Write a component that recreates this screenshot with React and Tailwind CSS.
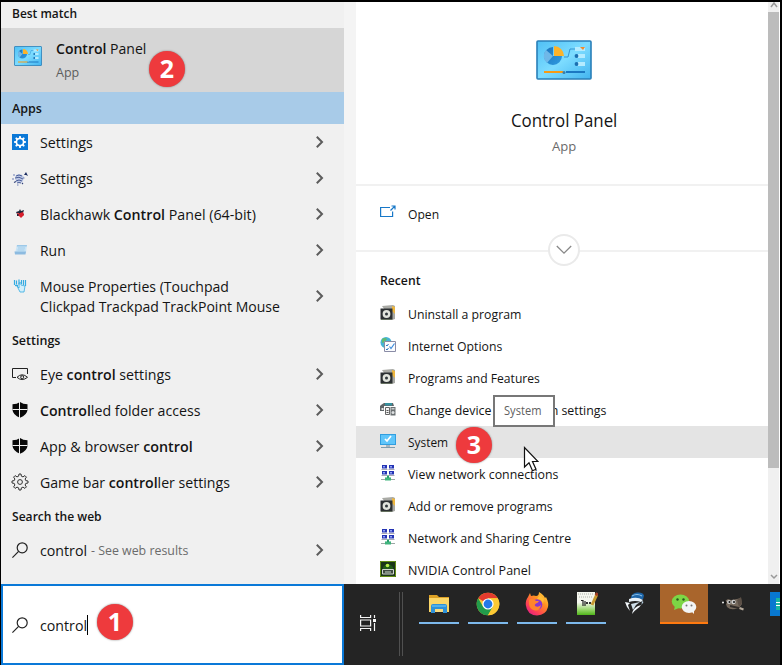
import { useLayoutEffect, useRef } from "react";

// Squeezes or stretches a line of text to an exact width, and seats it on its baseline.
function Fit({ w, className = "", outer = "", children }) {
  const ref = useRef(null);
  useLayoutEffect(() => {
    const el = ref.current;
    const natural = el.offsetWidth;
    if (natural > 0) el.style.transform = `translateY(1px) scaleX(${w / natural})`;
  }, [w]);
  return (
    <div className={`flex shrink-0 whitespace-nowrap ${outer}`} style={{ width: w }}>
      <span ref={ref} className={`shrink-0 origin-left ${className}`}>
        {children}
      </span>
    </div>
  );
}

const B = ({ children }) => <span className="font-semibold">{children}</span>;

const ControlPanelIcon = ({ className }) => (
  <svg viewBox="0 0 56 40" className={className}>
    <defs>
      <linearGradient id="cp" x1="0" y1="0" x2="1" y2="1">
        <stop offset="0" stopColor="#4fc0f5" />
        <stop offset="0.5" stopColor="#7ddcff" />
        <stop offset="1" stopColor="#42b4f0" />
      </linearGradient>
      <linearGradient id="pie" x1="0" y1="0" x2="1" y2="1">
        <stop offset="0" stopColor="#1c74bd" />
        <stop offset="1" stopColor="#2f9be0" />
      </linearGradient>
    </defs>
    <rect x="1" y="1" width="54" height="38" rx="1" fill="url(#cp)" stroke="#2a7fb8" strokeWidth="1.600" />
    <path d="M17 16V7A9 9 0 1 0 26 16Z" fill="url(#pie)" />
    <path d="M17 16L10 10A9 9 0 0 0 11 23Z" fill="#6fb8e8" />
    <path d="M18 16V6a10 10 0 0 1 10 10Z" fill="#fcb32a" />
    <path d="M28 17h4l2-8h8" fill="none" stroke="#3594d2" />
    <path d="M39 7h10v4H39zM42 14h7v4H42zM42 22h7v4H42z" fill="#b4ebff" />
    <path d="M44 7h5l-2 3z" fill="#f08a2a" />
    <circle cx="40.500" cy="16" r="1.900" fill="#1c6fb0" />
    <circle cx="40.500" cy="24" r="1.900" fill="#1c6fb0" />
    <path d="M8 32h19" stroke="#f79b14" strokeWidth="2" />
    <path d="M30 32h19" stroke="#1b78c2" strokeWidth="2" />
    <circle cx="28" cy="32.500" r="1.500" fill="#3b7ea8" />
  </svg>
);

const GEAR = "M7 0h2l.4 2.200 1.600.7L12.900 1.600l1.500 1.500-1.300 1.900.7 1.600L16 7v2l-2.200.4-.7 1.600 1.300 1.900-1.500 1.500-1.900-1.300-1.600.7L9 16H7l-.4-2.200-1.600-.7-1.900 1.300-1.500-1.500L2.900 11l-.7-1.600L0 9V7l2.200-.4L2.900 5 1.600 3.100l1.500-1.500L5 2.900l1.600-.7z";

const BlueGear = () => (
  <svg viewBox="0 0 16 16" className="size-4">
    <path d="M0 0h16v16H0z" fill="#0a78d7" />
    <g transform="translate(2 2) scale(.75)">
      <path d={GEAR} fill="#fff" />
      <circle cx="8" cy="8" r="3.700" fill="#0a78d7" />
    </g>
  </svg>
);
const Molecule = () => (
  <svg viewBox="0 0 16 16" className="size-4" fill="none">
    <path d="M3 7q1-3 4-3t5 3l-1 4q-2 3-5 2-3-2-3-6z" fill="#bcc7e4" />
    <path d="M4 6q3-2 6 0M3 8q4-2 8 1M4 11q3-2 6 0M5 13q2-1 4 0" stroke="#4d5f98" strokeWidth="1" />
    <path d="M12 5l2-3 2 4-2-1z" fill="#1b2c60" />
    <path d="M2 12.500l2-1M10 13l1 1" stroke="#33447c" strokeWidth="1.100" />
    <path d="M0 9h2M5 15h1.500M1 5h2M11 8h1.500" stroke="#6f7fb5" strokeWidth="1.200" />
  </svg>
);
const Blackhawk = () => (
  <svg viewBox="0 0 16 16" className="size-4">
    <path d="M4 6l3-1 1-2 1 2 3-1-1 3 1 2-3 1-3 0-1 0 0-2z" fill="#20263a" />
    <path d="M8 7l3-1 1 3-3 3-3-3z" fill="#d81e2c" />
    <path d="M5 7h2v1H5z" fill="#d9414c" />
  </svg>
);
const RunIcon = () => (
  <svg viewBox="0 0 16 16" className="size-4">
    <path d="M5 3h10l-1 8H3z" fill="#c9e4f6" />
    <path d="M5 3h10l-.3 1.500H4.700z" fill="#9cc8e8" />
    <path d="M6 6h7M5.500 8h7" stroke="#a4cdea" />
    <path d="M2.500 9.500h11.500l-.5 3H3z" fill="#8dbbe0" />
  </svg>
);
const MouseIcon = () => (
  <svg viewBox="0 0 16 16" className="size-4" fill="none" stroke="#35ace2">
    <path d="M5 8l2 2V5q1.500-1 2 0v2l4 1-1 6H8z" fill="#d3effb" strokeWidth=".8" />
    <path d="M2.500 2v5M4.500 2.500v4M7 1.500v5M9.500 2v4M11.500 2v5M13.500 2v6" strokeWidth="1.200" />
    <path d="M3 7.500h3" strokeWidth="1.300" />
  </svg>
);
const EyeIcon = () => (
  <svg viewBox="0 0 16 16" className="size-4" fill="none" stroke="#222" strokeWidth="1">
    <path d="M4 11.500H.5v-9h15v5.500" />
    <path d="M5 11.300q5-5 10.500 0q-5.500 4.500-10.500 0z" />
    <circle cx="10.200" cy="11.200" r="1.500" />
  </svg>
);
const ShieldIcon = () => (
  <svg viewBox="0 0 16 16" className="size-4">
    <path d="M8 0Q5 2.200 .5 2.200V8Q1 13 8 15.800Q15 13 15.500 8V2.200Q11 2.200 8 0z" fill="#080808" />
    <path d="M7.500 0v16M.5 7.500h15" stroke="#f0f0f0" strokeWidth="1" />
  </svg>
);
const GearOutline = () => (
  <svg viewBox="0 0 16 16" className="size-4 overflow-visible" fill="none" stroke="#333">
    <path d={GEAR} strokeWidth="1" strokeLinejoin="round" />
    <circle cx="8" cy="8" r="2.400" />
  </svg>
);
const SearchIcon = () => (
  <svg viewBox="0 0 16 16" className="size-4 shrink-0" fill="none" stroke="#222" strokeWidth="1.200">
    <circle cx="10.200" cy="5.800" r="5" />
    <path d="M6.600 9.400L.4 15.600" />
  </svg>
);

const Chevron = () => (
  <svg viewBox="0 0 8 12" className="ml-auto mr-[20px] h-3 w-2" fill="none" stroke="#5c5c5c" strokeWidth="2">
    <path d="M.8 .8L6 6L.8 11.200" />
  </svg>
);

const Disc = () => (
  <svg viewBox="0 0 16 16" className="size-4">
    <path d="M2 1l11-1 2 1v13l-3 1z" fill="#a9aaa5" />
    <path d="M12 1l3 1v7l-3-3z" fill="#edb63f" />
    <path d="M.5 3.500h12v11H.5z" fill="#2c3032" />
    <circle cx="6.500" cy="9" r="3.900" fill="#e2e5dd" />
    <circle cx="6.500" cy="9" r="1.500" fill="#30383b" />
    <path d="M1 14h11v1H1z" fill="#65705f" />
  </svg>
);
const Internet = () => (
  <svg viewBox="0 0 16 16" className="size-4">
    <circle cx="6" cy="5.500" r="5.500" fill="#45b3d7" />
    <path d="M2 2q3-2 5 0L5 5 2 6zM3 8l3 3-1 1z" fill="#62ba70" />
    <path d="M4.500 4.500h11v10h-11z" fill="#fbfcfe" stroke="#8a8ca6" />
    <path d="M6 8l1 1 1.500-2M6 12l1 1 1.500-2" fill="none" stroke="#2b79c2" />
    <path d="M9.500 9.500l1.500 2 3.500-5" fill="none" stroke="#3c8cdc" strokeWidth="1.200" />
  </svg>
);
const Device = () => (
  <svg viewBox="0 0 16 16" className="size-4">
    <path d="M1 4l3-2h9l1 3H4v5H0V5z" fill="#5f6568" />
    <path d="M5 2h7v2.500H5z" fill="#37919f" />
    <path d="M1.500 7h2v2h-2z" fill="#e8eaea" />
    <path d="M5.500 6.500h4v7h-4z" fill="#f2f2f2" stroke="#666" />
    <path d="M10.500 6h5v8.500h-5z" fill="#6b7072" />
    <path d="M11.500 7h3v1.500h-3z" fill="#c9cccd" />
    <circle cx="13" cy="11.500" r="1.500" fill="#dde0e1" />
    <path d="M6.500 9.500h2M6.500 11.500h2" stroke="#555" />
  </svg>
);
const SystemIcon = () => (
  <svg viewBox="0 0 16 16" className="size-4">
    <path d="M0 1h16v11H0z" fill="#329edf" />
    <path d="M1 2h14v9H1z" fill="#5fc5fa" />
    <path d="M5 6l2 2 4-5" fill="none" stroke="#fff" strokeWidth="1.700" />
    <path d="M6 12h4v2H6z" fill="#a8b5be" />
    <path d="M1 14.500h14" stroke="#7f9cae" />
  </svg>
);
const NetworkIcon = () => (
  <svg viewBox="0 0 16 16" className="size-4">
    {[[2, 0], [9, 0], [2, 6], [9, 6]].map(([x, y]) => (
      <g key={`${x}${y}`}>
        <path d={`M${x} ${y}h5v3.500h-5z`} fill="#2534b4" />
        <path d={`M${x + 1} ${y + 1}h2v1.500h-2z`} fill="#91a4f4" />
        <path d={`M${x - 0.5} ${y + 4.5}h6`} stroke="#a8a9b5" />
      </g>
    ))}
    <path d="M7 10.500h2v2h2v2.500H5v-2.500h2z" fill="#27a06d" />
    <path d="M1 14.500h14" stroke="#9ba8a4" />
    <path d="M5 13h6v2.500H5z" fill="#40b47c" />
  </svg>
);
const Nvidia = () => (
  <svg viewBox="0 0 16 16" className="size-4">
    <path d="M0 0h16v16H0z" fill="#1a3519" />
    <path d="M.5.5h15v15H.5z" fill="none" stroke="#638e16" />
    <path d="M3 6q5-6 10 0v2H3z" fill="#215b18" />
    <circle cx="7.500" cy="4.500" r="1.800" fill="#b8ef4a" />
    <path d="M2.500 8.500h11v4.500h-11z" fill="#404b42" stroke="#d1d6d1" />
    <path d="M5 11h6" stroke="#c4d6c4" />
  </svg>
);

const apps = [
  { icon: BlueGear, w: 53, text: "Settings" },
  { icon: Molecule, w: 53, text: "Settings" },
  { icon: Blackhawk, w: 216, text: <>Blackhawk <B>Control</B> Panel (64-bit)</> },
  { icon: RunIcon, w: 26, text: "Run" },
];
const settings = [
  { icon: EyeIcon, w: 131, text: <>Eye <B>control</B> settings</> },
  { icon: ShieldIcon, w: 160, text: <><B>Control</B>led folder access</> },
  { icon: ShieldIcon, w: 153, text: <>App &amp; browser <B>control</B></> },
  { icon: GearOutline, w: 190, text: <>Game bar <B>control</B>ler settings</> },
];
const recent = [
  { icon: Disc, w: 113, text: "Uninstall a program" },
  { icon: Internet, w: 94, text: "Internet Options" },
  { icon: Disc, w: 132, text: "Programs and Features" },
  { icon: Device, w: 198, text: "Change device installation settings" },
  { icon: SystemIcon, w: 40, text: "System", active: true },
  { icon: NetworkIcon, w: 150, text: "View network connections" },
  { icon: Disc, w: 145, text: "Add or remove programs" },
  { icon: NetworkIcon, w: 163, text: "Network and Sharing Centre" },
  { icon: Nvidia, w: 123, text: "NVIDIA Control Panel" },
];

const Row = ({ icon: Icon, w, text }) => (
  <div className="flex h-9 items-center pl-[11px]">
    <Icon />
    <Fit w={w} outer="ml-3" className="text-[14.500px] leading-5">{text}</Fit>
    <Chevron />
  </div>
);

const Header = ({ w, children, className = "h-8" }) => (
  <div className={`flex shrink-0 items-center pl-[11px] ${className}`}>
    <Fit w={w} className="text-[12.500px] font-semibold leading-4">{children}</Fit>
  </div>
);

const Badge = ({ n, className }) => (
  <div className={`absolute flex size-9 items-center justify-center rounded-full bg-[#ee3a3d] pb-px text-[25px] font-bold leading-none text-white shadow-[0_0_2px_#777] ${className}`}>
    {n}
  </div>
);

const Explorer = () => (
  <svg viewBox="0 0 24 24" className="size-6">
    <path d="M2 3h8l2 2h10v4H2z" fill="#dda125" />
    <path d="M2 6h20v14H2z" fill="#fbd668" />
    <path d="M4 14q0-2 2-2h12q2 0 2 2v7h-4v-4H8v4H4z" fill="#2e91d9" />
    <path d="M8 17h8v3H8z" fill="#f8da80" />
    <path d="M5 13h14v2H5z" fill="#51afea" />
  </svg>
);
const Chrome = () => (
  <svg viewBox="0 0 24 24" className="size-6">
    <circle cx="12" cy="12" r="11.300" fill="#fcc934" />
    <path d="M12 12L2.200 6.350A11.300 11.300 0 0 1 21.800 6.350H12z" fill="#e33b2e" />
    <path d="M2.200 6.350A11.300 11.300 0 0 0 12 23.300L16.900 14.800 12 12 7.100 14.800z" fill="#229b4b" />
    <path d="M12 6.350h9.800A11.300 11.300 0 0 1 12 23.300l4.900-8.500z" fill="#fcc934" />
    <circle cx="12" cy="12" r="5.600" fill="#fff" />
    <circle cx="12" cy="12" r="4.400" fill="#2479e8" />
  </svg>
);
const Firefox = () => (
  <svg viewBox="0 0 24 24" className="size-6">
    <defs>
      <linearGradient id="fx" x1="1" y1="0" x2="0.200" y2="1">
        <stop offset="0" stopColor="#ffe34a" />
        <stop offset="0.400" stopColor="#ff9220" />
        <stop offset="0.750" stopColor="#ff4352" />
        <stop offset="1" stopColor="#e21c86" />
      </linearGradient>
    </defs>
    <path d="M3 5l2-4 1 3q3-1 5 0Q14 4 14 0q5 3 6 6l1-1q3 6 2 10-2 8-11 8.500Q2 23 .8 13 .5 8 3 5z" fill="url(#fx)" />
    <circle cx="12" cy="12.500" r="5.300" fill="#8a35d0" />
    <path d="M4 8q4-3 7 1l3 0q-1 2-3 2.500-2 1-1 2.500 3 2 6-1-1 6-6 5.500-5-1-6-6z" fill="#ff842d" />
    <path d="M12 7q5 0 6 5l1-5-4-4z" fill="#ffbd36" />
  </svg>
);
const Notepad = () => (
  <svg viewBox="0 0 24 24" className="size-6">
    <defs>
      <linearGradient id="np" x1="0" y1="0" x2="0" y2="1">
        <stop offset="0.450" stopColor="#f5f7ef" />
        <stop offset="0.750" stopColor="#9ed873" />
        <stop offset="1" stopColor="#4fb51a" />
      </linearGradient>
    </defs>
    <path d="M3 0h18v23H3z" fill="url(#np)" />
    <path d="M4 2h15M5 5h13" stroke="#adb0a8" strokeDasharray="1 1" />
    <path d="M7 8.500h2v5.500M11 9v5" stroke="#222" strokeWidth="1.200" fill="none" />
    <path d="M12 11h2M15 11h2" stroke="#333" strokeWidth="2" />
    <path d="M23 2l-5 11" stroke="#c69a31" strokeWidth="3" />
    <path d="M23.500 1l-1.500 2.500" stroke="#a33e24" strokeWidth="3" />
  </svg>
);
const Thief = () => (
  <svg viewBox="0 0 24 24" className="size-6">
    <path d="M8 5q1-4 6-4.500 6-.5 7 3l-1 4q-6-2-12 0z" fill="#1d65a8" />
    <path d="M9 4q5-3 10 0" fill="none" stroke="#8bbfe6" strokeWidth="1.200" />
    <path d="M6 7q8-3 14 1l-2 2q-6-2-12 0z" fill="#e8f1f8" />
    <path d="M2 10l5 1-2 2 2 6-3-4z" fill="#f2f7fb" />
    <path d="M8 12l9-2-4 3-3 5z" fill="#cfdfea" />
    <path d="M9 22q1-7 9-9-1 2-4 4-3 2-5 5z" fill="#f2f7fb" />
    <path d="M19 9l1.500 1-2 3z" fill="#b8cfe0" />
  </svg>
);
const WeChat = () => (
  <svg viewBox="0 0 24 24" className="size-6 overflow-visible">
    <ellipse cx="8.500" cy="9.500" rx="8.700" ry="7" fill="#7dd645" />
    <path d="M3 14l-1 4 5-2z" fill="#7dd645" />
    <circle cx="5.500" cy="7.500" r="1.200" fill="#28581e" />
    <circle cx="11.500" cy="7.500" r="1.200" fill="#28581e" />
    <ellipse cx="17" cy="15" rx="7.300" ry="6" fill="#f3f5f5" />
    <path d="M19 19l3 3v-4z" fill="#f3f5f5" />
    <circle cx="14.500" cy="13.500" r="1" fill="#777" />
    <circle cx="19.500" cy="13.500" r="1" fill="#777" />
  </svg>
);
const Gimp = () => (
  <svg viewBox="0 0 24 24" className="size-6">
    <path d="M4 9l3-2 3 1 6-1 4-1 1 6-3 4q-8 3-12-1z" fill="#75695d" />
    <path d="M16 8l4-3 1 6-3 4z" fill="#5b4f46" />
    <circle cx="8" cy="10" r="2" fill="#ccc" />
    <circle cx="12.500" cy="10" r="2.200" fill="#ccc" />
    <circle cx="8.500" cy="10" r="1" fill="#151515" />
    <circle cx="13" cy="10" r="1" fill="#151515" />
    <path d="M1 10l3-2 2 3-3 2z" fill="#161616" />
    <circle cx="2" cy="10.500" r="1" fill="#eee" />
    <path d="M9 14l11 2.500" stroke="#302b28" strokeWidth="2" />
    <path d="M18.500 16l4 1.500" stroke="#b5aa9c" strokeWidth="2" />
  </svg>
);

const tasks = [
  { icon: Explorer, open: true },
  { icon: Chrome, open: true },
  { icon: Firefox, open: true },
  { icon: Notepad, open: true },
  { icon: Thief },
  { icon: WeChat, alert: true },
  { icon: Gimp },
];

export default function App() {
  return (
    <div className="relative flex h-[665px] w-[782px] flex-col overflow-hidden border-l border-r-2 border-t-2 border-black bg-[#242424] font-['Open_Sans','Noto_Sans',sans-serif] text-[#141414]">
      <div className="flex h-[582px] shrink-0 overflow-hidden bg-white">
        <div className="flex w-[343px] shrink-0 flex-col bg-[#f0f0f0]">
          <Header w={65} className="h-[26px] pb-[5px]">Best match</Header>
          <div className="flex h-16 shrink-0 items-center bg-[#d6d6d6] pl-3">
            <ControlPanelIcon className="mb-2 h-5 w-[30px]" />
            <div className="ml-[13px] flex flex-col gap-1">
              <Fit w={90} className="text-[14.500px] leading-5"><B>Control</B> Panel</Fit>
              <Fit w={23} className="text-[12.500px] leading-5 text-[#5d5d5d]">App</Fit>
            </div>
          </div>
          <Header w={30} className="h-8 bg-[#a8cbe8]">Apps</Header>
          {apps.map((r, i) => <Row key={i} {...r} />)}
          <div className="flex h-14 items-center pl-[11px]">
            <div className="mb-5"><MouseIcon /></div>
            <div className="ml-3">
              <Fit w={189} className="text-[14.500px] leading-5">Mouse Properties (Touchpad</Fit>
              <Fit w={240} className="text-[14.500px] leading-5">Clickpad Trackpad TrackPoint Mouse</Fit>
            </div>
            <Chevron />
          </div>
          <Header w={48}>Settings</Header>
          {settings.map((r, i) => <Row key={i} {...r} />)}
          <Header w={90}>Search the web</Header>
          <div className="flex h-9 items-center pl-[11px]">
            <SearchIcon />
            <div className="ml-3 flex items-center gap-1">
              <Fit w={47} className="text-[14.500px] leading-5">control</Fit>
              <Fit w={97} className="text-[12.500px] leading-5 text-[#6b6b6b]">- See web results</Fit>
            </div>
            <Chevron />
          </div>
        </div>
        <div className="w-3 shrink-0 bg-[#f4f4f4]" />
        <div className="flex w-[412px] shrink-0 flex-col bg-white">
          <div className="flex h-[184px] shrink-0 flex-col items-center border-b-2 border-[#f1f1f1] pt-[38px]">
            <ControlPanelIcon className="ml-1 h-10 w-14" />
            <Fit w={106} outer="ml-1 mt-[27px]" className="text-[17.500px] leading-6">Control Panel</Fit>
            <Fit w={24} outer="ml-1 mt-[5px]" className="text-[12.500px] leading-5 text-[#6a6a6a]">App</Fit>
          </div>
          <div className="relative flex h-[66px] shrink-0 items-center border-b-2 border-[#f1f1f1] pb-2 pl-6">
            <svg viewBox="0 0 16 16" className="mb-1 size-4" fill="none" stroke="#1878c8" strokeWidth="1.200">
              <path d="M10 3.500H.6v9h12V7.500M10.500 6.500L15 2M11.500 2H15v3.500" />
            </svg>
            <Fit w={31} outer="ml-3" className="text-[12.500px] leading-4">Open</Fit>
            <div className="absolute left-[192px] top-[48px] flex size-8 items-center justify-center rounded-full border-2 border-[#eaeaea] bg-white">
              <svg viewBox="0 0 16 10" className="h-[10px] w-4" fill="none" stroke="#888" strokeWidth="1.300">
                <path d="M.8 1L8 8.200L15.200 1" />
              </svg>
            </div>
          </div>
          <div className="flex h-[46px] shrink-0 items-center pl-6 pt-[10px]">
            <Fit w={40} className="text-[12.500px] font-semibold leading-4">Recent</Fit>
          </div>
          {recent.map(({ icon: Icon, w, text, active }, i) => (
            <div key={i} className={`flex h-8 shrink-0 items-center pl-6 ${active ? "bg-[#e4e4e4]" : ""}`}>
              <div className="mb-[3px]"><Icon /></div>
              <Fit w={w} outer="ml-3" className="text-[12.500px] leading-4">{text}</Fit>
            </div>
          ))}
        </div>
        <div className="flex w-[11px] shrink-0 flex-col items-center bg-[#f0f0f0]">
          <svg viewBox="0 0 8 6" className="mb-1 h-[6px] w-2 shrink-0" fill="none" stroke="#999" strokeWidth="1.500"><path d="M1 5l3-4 3 4" /></svg>
          <div className="h-[456px] w-full shrink-0 bg-[#bcbcbc]" />
          <svg viewBox="0 0 8 6" className="mb-1 mt-auto h-[6px] w-2" fill="none" stroke="#999" strokeWidth="1.500"><path d="M1 1l3 3 3-3" /></svg>
        </div>
      </div>

      <div className="flex h-[81px] shrink-0">
        <div className="flex w-[343px] shrink-0 items-center border-2 border-[#0a79d8] bg-white pl-[9px]">
          <SearchIcon />
          <Fit w={47} outer="ml-3" className="text-[14.500px] leading-5">control</Fit>
          <div className="h-5 w-px bg-black" />
        </div>
        <div className="flex w-[55px] shrink-0 items-center pb-[3px] pl-4">
          <svg viewBox="0 0 16 16" className="size-4" fill="none" stroke="#f5f5f5" strokeWidth="1.200">
            <path d="M.6 0v2.500h10V0M.6 16v-2.500h10V16M.6 5h10v6H.6zM14.500 0v3M14.500 8v8" />
            <path d="M13 4h3v3h-3z" fill="#f5f5f5" stroke="none" />
          </svg>
        </div>
        <div className="mt-2 flex h-16 w-4 shrink-0 gap-[2px]">
          <div className="h-16 w-px bg-[#505050]" />
          <div className="h-16 w-px bg-[#505050]" />
        </div>
        <div className="flex h-10 gap-px">
          {tasks.map(({ icon: Icon, open, alert }, i) => (
            <div key={i} className={`flex w-12 shrink-0 flex-col items-center pt-2 ${alert ? "bg-[#a9652c]" : ""}`}>
              <Icon />
              <div className={`mt-auto h-[2px] shrink-0 ${alert ? "w-12 bg-[#ff7a10]" : open ? "w-10 bg-[#7db9ec]" : ""}`} />
            </div>
          ))}
        </div>
        <div className="ml-[13px] mt-2 flex h-6 w-[10px] shrink-0 items-center justify-end overflow-hidden bg-[#0878d0]">
          <div className="flex h-3 w-1 flex-col justify-center gap-[2px] bg-[#19b6a0]">
            <div className="h-px bg-white" />
            <div className="h-px bg-white" />
          </div>
        </div>
      </div>

      <div className="absolute left-[492px] top-[393px] flex h-[32px] w-[62px] items-center justify-center border-2 border-[#777] bg-white pb-[2px] pr-[3px]">
        <Fit w={37} className="text-[12px] leading-4 text-[#5f5f5f]">System</Fit>
      </div>
      <Badge n="2" className="left-[148px] top-[49px]" />
      <Badge n="3" className="left-[455px] top-[425px]" />
      <Badge n="1" className="left-[96px] top-[602px]" />
      <svg viewBox="0 0 16 26" className="absolute left-[522px] top-[444px] h-[26px] w-4" fill="#fff" stroke="#111" strokeWidth="1.200">
        <path d="M1.500 1.500v19.500l4.500-4.200 3.500 8 3.500-1.600-3.500-7.700h5.500z" />
      </svg>
    </div>
  );
}
